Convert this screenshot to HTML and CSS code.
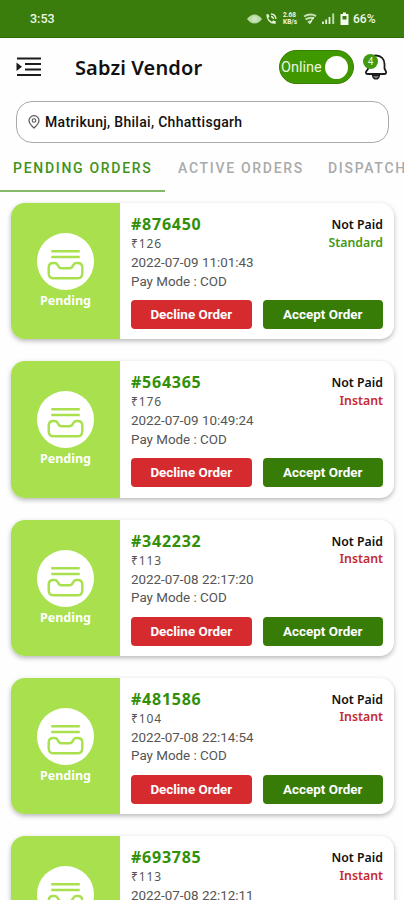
FILE: index.html
```html
<!DOCTYPE html>
<html lang="en">
<head>
  <meta charset="UTF-8" />
  <meta name="viewport" content="width=device-width, initial-scale=1.0" />
  <title>Sabzi Vendor</title>
  <link rel="stylesheet" href="styles.css">
</head>
<body>

  <svg class="defs" width="0" height="0">
    <symbol id="tray" viewBox="0 0 56 56">
      <g fill="none" stroke="#a8e04e" stroke-width="2.400" stroke-linejoin="round">
        <path d="M14 18h28M14 23.500h28" />
        <path d="M16 29.500h1.500q2 0 3 2.200 1.200 3 3.500 3h8q2.300 0 3.500-3 1-2.200 3-2.200h1.500q4.500 0 4.500 4.500v5.500q0 5-5 5h-23q-5 0-5-5v-5.500q0-4.500 4.500-4.500z" />
      </g>
    </symbol>
  </svg>

  <div class="status-bar">
    <span class="clock">3:53</span>
    <div class="status-icons">
      <svg class="eye" width="15" height="10" viewBox="0 0 15 10"><path d="M0 5Q3.500 .5 7.500 .5T15 5Q11.500 9.500 7.500 9.500T0 5z" fill="#b9dba3" /><circle cx="7.500" cy="5" r="2.800" fill="#cbe5ba" /></svg>
      <svg class="call" width="12" height="12" viewBox="0 0 12 12"><path d="M1.200 1.200h2.400l.8 2.600-1.300 1.300q1.200 2.500 3.700 3.700l1.300-1.300 2.600.8v2.400Q2 11.500 1.200 1.200z" fill="#e4f2db" /><path d="M6 1q4.500 .3 5 5M6 3.500q2.200 .2 2.500 2.500" fill="none" stroke="#e4f2db" stroke-width="1.300" /></svg>
      <div class="speed">2.68<br>KB/s</div>
      <svg class="wifi" width="14" height="12" viewBox="0 0 14 12"><path d="M1 3.500Q7 0 13 3M2.500 6.500Q7 3.500 11 5.500M5 9.500q2-1.800 3.500-.5" fill="none" stroke="#c5e2b3" stroke-width="2" /><path d="M6.500 11l4-7" stroke="#e4f2db" stroke-width="1.300" /></svg>
      <svg class="signal" width="13" height="11" viewBox="0 0 13 11"><path d="M1 11V8.500M4.200 11V6.500M7.500 11V4" stroke="#e4f2db" stroke-width="1.800" /><path d="M11.200 11V.5" stroke="#b9dba3" stroke-width="2" /></svg>
      <svg class="battery" width="9" height="13" viewBox="0 0 9 13"><path d="M3 .5h3V2h2.500v11h-8V2H3z" fill="#f4faf0" /><path d="M2.500 4h4v3.500h-4z" fill="#3b7d0c" /></svg>
      <span class="percent">66%</span>
    </div>
  </div>

  <header class="top-bar">
    <svg class="menu" width="26" height="20" viewBox="0 0 26 20"><path d="M1 1.500h24M9 7h16M9 12.500h16M1 18h24" stroke="#1c1c1c" stroke-width="1.900" /><path d="M.5 5.500L6 9.800 .5 14z" fill="#1c1c1c" /></svg>
    <h1>Sabzi Vendor</h1>
    <div class="switch"><span>Online</span><i class="knob"></i></div>
    <div class="bell">
      <svg width="24" height="26" viewBox="0 0 24 26"><path d="M12 1.500c-5 0-8 3.500-8 8.500v5l-2 2.700q-.5 2.300 1.800 2.300h16.400q2.300 0 1.800-2.300L20.500 14.500V10c0-5-3.500-8.500-8.500-8.500z" fill="#fff" stroke="#1c1c1c" stroke-width="1.800" stroke-linejoin="round" /><path d="M8.500 21.500h7q-.8 3.500-3.500 3.500t-3.500-3.500z" fill="#777" stroke="#1c1c1c" stroke-width="1.200" /></svg>
      <span class="badge">4</span>
    </div>
  </header>

  <div class="location">
    <svg width="12" height="14" viewBox="0 0 12 14"><path d="M6 13Q1 8.500 1 5.500a5 4.800 0 0 1 10 0Q11 8.500 6 13z" fill="none" stroke="#555" stroke-width="1.200" /><circle cx="6" cy="5.500" r="1.800" fill="none" stroke="#555" stroke-width="1.100" /></svg>
    <span>Matrikunj, Bhilai, Chhattisgarh</span>
  </div>

  <nav class="tabs">
    <a class="tab active">PENDING ORDERS</a>
    <a class="tab">ACTIVE ORDERS</a>
    <a class="tab">DISPATCH</a>
  </nav>

  <main class="orders">
    <div class="order">
      <div class="state">
        <div class="state-icon"><svg width="57" height="57"><use href="#tray" /></svg></div>
        <span>Pending</span>
      </div>
      <div class="info">
        <div class="row">
          <div class="details">
            <h2>#876450</h2>
            <p class="price">₹126</p>
            <p class="date">2022-07-09 11:01:43</p>
            <p class="pay">Pay Mode : COD</p>
          </div>
          <div class="payment"><p>Not Paid</p><p class="standard">Standard</p></div>
        </div>
        <div class="actions">
          <button class="decline">Decline Order</button>
          <button class="accept">Accept Order</button>
        </div>
      </div>
    </div>

    <div class="order">
      <div class="state">
        <div class="state-icon"><svg width="57" height="57"><use href="#tray" /></svg></div>
        <span>Pending</span>
      </div>
      <div class="info">
        <div class="row">
          <div class="details">
            <h2>#564365</h2>
            <p class="price">₹176</p>
            <p class="date">2022-07-09 10:49:24</p>
            <p class="pay">Pay Mode : COD</p>
          </div>
          <div class="payment"><p>Not Paid</p><p class="instant">Instant</p></div>
        </div>
        <div class="actions">
          <button class="decline">Decline Order</button>
          <button class="accept">Accept Order</button>
        </div>
      </div>
    </div>

    <div class="order">
      <div class="state">
        <div class="state-icon"><svg width="57" height="57"><use href="#tray" /></svg></div>
        <span>Pending</span>
      </div>
      <div class="info">
        <div class="row">
          <div class="details">
            <h2>#342232</h2>
            <p class="price">₹113</p>
            <p class="date">2022-07-08 22:17:20</p>
            <p class="pay">Pay Mode : COD</p>
          </div>
          <div class="payment"><p>Not Paid</p><p class="instant">Instant</p></div>
        </div>
        <div class="actions">
          <button class="decline">Decline Order</button>
          <button class="accept">Accept Order</button>
        </div>
      </div>
    </div>

    <div class="order">
      <div class="state">
        <div class="state-icon"><svg width="57" height="57"><use href="#tray" /></svg></div>
        <span>Pending</span>
      </div>
      <div class="info">
        <div class="row">
          <div class="details">
            <h2>#481586</h2>
            <p class="price">₹104</p>
            <p class="date">2022-07-08 22:14:54</p>
            <p class="pay">Pay Mode : COD</p>
          </div>
          <div class="payment"><p>Not Paid</p><p class="instant">Instant</p></div>
        </div>
        <div class="actions">
          <button class="decline">Decline Order</button>
          <button class="accept">Accept Order</button>
        </div>
      </div>
    </div>

    <div class="order">
      <div class="state">
        <div class="state-icon"><svg width="57" height="57"><use href="#tray" /></svg></div>
      </div>
      <div class="info">
        <div class="row">
          <div class="details">
            <h2>#693785</h2>
            <p class="price">₹113</p>
            <p class="date">2022-07-08 22:12:11</p>
          </div>
          <div class="payment"><p>Not Paid</p><p class="instant">Instant</p></div>
        </div>
      </div>
    </div>
  </main>

</body>
</html>
```
FILE: styles.css
```css
* {
  box-sizing: border-box;
}

html {
  overflow: hidden;
}

body {
  margin: 0;
  height: 900px;
  display: flex;
  flex-direction: column;
  overflow: hidden;
  background: #fefefe;
  font-family: Roboto, sans-serif;
  color: #111;
}

h1, h2, p {
  margin: 0;
}

svg {
  display: block;
  flex: none;
}

.defs {
  position: absolute;
}

.status-bar {
  flex: none;
  height: 38px;
  padding: 0 27px 0 30px;
  display: flex;
  align-items: center;
  justify-content: space-between;
  background: #3b7d0c;
  border-bottom: 1px solid #2d6b06;
  color: #eef7e8;
}

.clock {
  font-size: 12.5px;
  font-weight: 500;
}

.status-icons {
  display: flex;
  align-items: center;
}

.call {
  margin-left: 3px;
}

.speed {
  width: 15px;
  margin-left: 6px;
  font-size: 6.5px;
  line-height: 7px;
  font-weight: 700;
}

.wifi {
  margin-left: 5px;
}

.signal {
  margin-left: 5px;
}

.battery {
  margin-left: 5px;
}

.percent {
  width: 24px;
  margin-left: 4px;
  font-size: 12px;
  font-weight: 500;
}

.top-bar {
  flex: none;
  height: 58px;
  padding: 0 16px;
  display: flex;
  align-items: center;
}

.top-bar h1 {
  margin-left: 33px;
  flex: 1;
  font-family: "Noto Sans", sans-serif;
  font-size: 20px;
  font-weight: 600;
  letter-spacing: 0.12px;
  white-space: nowrap;
}

.switch {
  width: 75px;
  height: 34px;
  padding: 0 5px 0 1px;
  display: flex;
  align-items: center;
  justify-content: space-between;
  border-radius: 17px;
  background: #409800;
  border: 1px solid #378000;
  color: #e9f5df;
  font-size: 14.5px;
}

.knob {
  width: 23px;
  height: 23px;
  border-radius: 50%;
  background: #fff;
}

.bell {
  position: relative;
  margin-left: 10px;
}

.badge {
  position: absolute;
  left: -1px;
  top: 0;
  width: 15px;
  height: 15px;
  border-radius: 50%;
  background: #409a10;
  color: #e9f5df;
  font-size: 10px;
  line-height: 15px;
  text-align: center;
}

.location {
  flex: none;
  height: 42px;
  margin: 5px 15px 0 16px;
  padding-left: 11px;
  display: flex;
  align-items: center;
  gap: 5px;
  border: 1px solid #aaa;
  border-radius: 16px;
  background: #fff;
  font-size: 14px;
  font-weight: 500;
  letter-spacing: 0.3px;
}

.tabs {
  flex: none;
  height: 49px;
  display: flex;
  overflow: hidden;
}

.tab {
  flex: none;
  padding: 16px 11px 0 13px;
  color: #aaa;
  font-size: 14px;
  line-height: 18px;
  font-weight: 500;
  letter-spacing: 1.7px;
}

.tab.active {
  width: 165px;
  padding-right: 0;
  color: #40921b;
  border-bottom: 2px solid #83b969;
}

.orders {
  flex: 1;
  min-height: 0;
  padding: 11px 10px 0 11px;
  display: flex;
  flex-direction: column;
  gap: 22px;
  overflow: hidden;
}

.order {
  flex: none;
  height: 136.25px;
  display: flex;
  overflow: hidden;
  border-radius: 14px;
  background: #fff;
  box-shadow: 0 2px 5px rgba(0, 0, 0, 0.28);
}

.state {
  width: 109px;
  padding-top: 30px;
  display: flex;
  flex-direction: column;
  align-items: center;
  background: #a8e04e;
  color: #fff;
  font-family: "Noto Sans", sans-serif;
  font-size: 12.5px;
  line-height: 22px;
  font-weight: 700;
}

.state-icon {
  width: 57px;
  height: 57px;
  border-radius: 50%;
  background: #fff;
}

.info {
  flex: 1;
  padding: 11px 11px 0;
}

.row {
  display: flex;
  justify-content: space-between;
  height: 86px;
}

.details {
  color: #555;
  font-size: 13.4px;
  line-height: 18.5px;
}

.details h2 {
  color: #329008;
  font-family: "Noto Sans", sans-serif;
  font-size: 16px;
  line-height: 20px;
  font-weight: 700;
  letter-spacing: 0.75px;
}

.details .price {
  font-family: "Noto Sans", sans-serif;
  font-size: 12px;
  line-height: 20px;
  letter-spacing: 0.9px;
}

.details .date,
.details .pay {
  white-space: nowrap;
}

.payment {
  padding-top: 2px;
  text-align: right;
  font-family: "Noto Sans", sans-serif;
  font-size: 12.3px;
  line-height: 17.5px;
  font-weight: 600;
}

.standard {
  color: #3f9a13;
}

.instant {
  color: #c52a30;
}

.actions {
  display: grid;
  grid-template-columns: 1fr 1fr;
  gap: 11px;
}

.actions button {
  height: 29px;
  padding: 0;
  border: none;
  border-radius: 4px;
  color: #fff;
  font-family: Roboto, sans-serif;
  font-size: 13.4px;
  font-weight: 700;
}

.decline {
  background: #d52b2f;
}

.accept {
  background: #387c08;
}
```
